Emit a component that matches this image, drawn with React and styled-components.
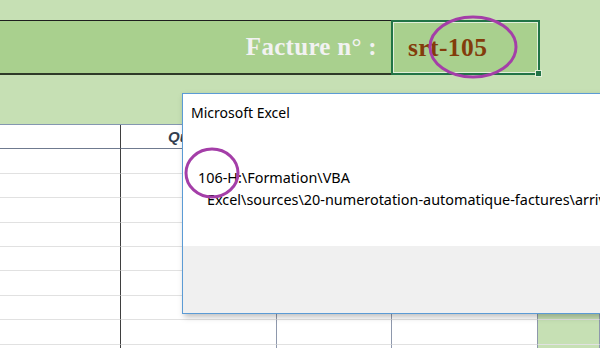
import React from "react";
import styled, { createGlobalStyle } from "styled-components";

const GlobalStyle = createGlobalStyle`
  html, body {
    margin: 0;
    padding: 0;
    background: #c6e0b4;
  }
`;

const Sheet = styled.div`
  position: relative;
  width: 600px;
  height: 348px;
  overflow: hidden;
  background: #c6e0b4;
  padding-top: 20px;
  box-sizing: border-box;
`;

const Banner = styled.div`
  display: flex;
  height: 55px;
`;

const LabelCell = styled.div`
  width: 391px;
  background: #a9d08e;
  border-top: 1px solid #1e1e1e;
  border-bottom: 2px solid #2e3a28;
  box-sizing: border-box;
  display: flex;
  align-items: center;
  justify-content: flex-end;
  padding-right: 14px;
  font-family: "Liberation Serif", "DejaVu Serif", serif;
  font-weight: bold;
  font-size: 25px;
  color: #f2f2f2;
  letter-spacing: 0.3px;
`;

const ValueCell = styled.div`
  position: relative;
  width: 149px;
  background: #a9d08e;
  border: 2px solid #217346;
  box-shadow: inset 0 0 0 1px #e2efda;
  box-sizing: border-box;
  display: flex;
  align-items: center;
  padding-left: 15px;
  font-family: "Liberation Serif", "DejaVu Serif", serif;
  font-weight: bold;
  font-size: 25.5px;
  color: #833c0b;
  letter-spacing: 0.4px;
`;

const Handle = styled.span`
  position: absolute;
  right: -4px;
  bottom: -4px;
  width: 5px;
  height: 5px;
  background: #217346;
  border: 1px solid #e2efda;
`;

const Table = styled.div`
  margin-top: 49px;
  display: grid;
  grid-template-columns: 121px 156px 115px 146px 1fr;
  grid-auto-rows: 24.4px;
  border-top: 1px solid #8497b0;
  background: #ffffff;
`;

const Cell = styled.div`
  box-sizing: border-box;
  border-bottom: 1px solid ${(p) => (p.$head ? "#6f7a8f" : "#e1e1e1")};
  border-right: 1px solid ${(p) => (p.$dark ? "#3f3f3f" : "#8e98ac")};
  background: ${(p) => (p.$green ? "#c6e0b4" : "#ffffff")};
  display: flex;
  align-items: center;
  justify-content: center;
  font-family: "Liberation Sans", Arial, sans-serif;
  font-weight: bold;
  font-style: italic;
  font-size: 15px;
  color: #333f4f;
`;

const Dialog = styled.div`
  position: absolute;
  left: 182px;
  top: 93px;
  width: 440px;
  height: 219px;
  display: flex;
  flex-direction: column;
  border: 1px solid #5b9bd5;
  box-shadow: 2px 3px 6px rgba(0, 0, 0, 0.25);
  background: #ffffff;
  font-family: "Noto Sans", "Open Sans", sans-serif;
  color: #000000;
`;

const DialogBody = styled.div`
  flex: 1;
  padding: 9px 0 0 8px;
  overflow: hidden;
`;

const DialogTitle = styled.div`
  font-size: 14px;
  line-height: 20px;
`;

const Message = styled.div`
  margin-top: 44px;
  padding-left: 7px;
  font-size: 14.4px;
  line-height: 22px;
  white-space: nowrap;
`;

const MessageLine = styled.div`
  padding-left: ${(p) => p.$indent || 0}px;
`;

const DialogFooter = styled.div`
  height: 67px;
  background: #f0f0f0;
`;

const Marks = styled.svg`
  position: absolute;
  left: 0;
  top: 0;
  pointer-events: none;
`;

const rows = Array.from({ length: 9 });

export default function App() {
  return (
    <>
      <GlobalStyle />
      <Sheet>
        <Banner>
          <LabelCell>Facture n° :</LabelCell>
          <ValueCell>
            srt-105
            <Handle />
          </ValueCell>
        </Banner>
        <Table>
          <Cell $head $dark />
          <Cell $head>Quantité</Cell>
          <Cell $head />
          <Cell $head />
          <Cell $head $green />
          {rows.map((_, i) => (
            <React.Fragment key={i}>
              <Cell $dark />
              <Cell />
              <Cell />
              <Cell />
              <Cell $green />
            </React.Fragment>
          ))}
        </Table>
        <Dialog>
          <DialogBody>
            <DialogTitle>Microsoft Excel</DialogTitle>
            <Message>
              <MessageLine>106-H:\Formation\VBA</MessageLine>
              <MessageLine $indent={9}>
                Excel\sources\20-numerotation-automatique-factures\arrivee
              </MessageLine>
            </Message>
          </DialogBody>
          <DialogFooter />
        </Dialog>
        <Marks width="600" height="348">
          <ellipse cx="473" cy="47" rx="43" ry="30" fill="none" stroke="#a43ea8" strokeWidth="3" />
          <ellipse cx="212" cy="173" rx="26" ry="24" fill="none" stroke="#a43ea8" strokeWidth="3" />
        </Marks>
      </Sheet>
    </>
  );
}
